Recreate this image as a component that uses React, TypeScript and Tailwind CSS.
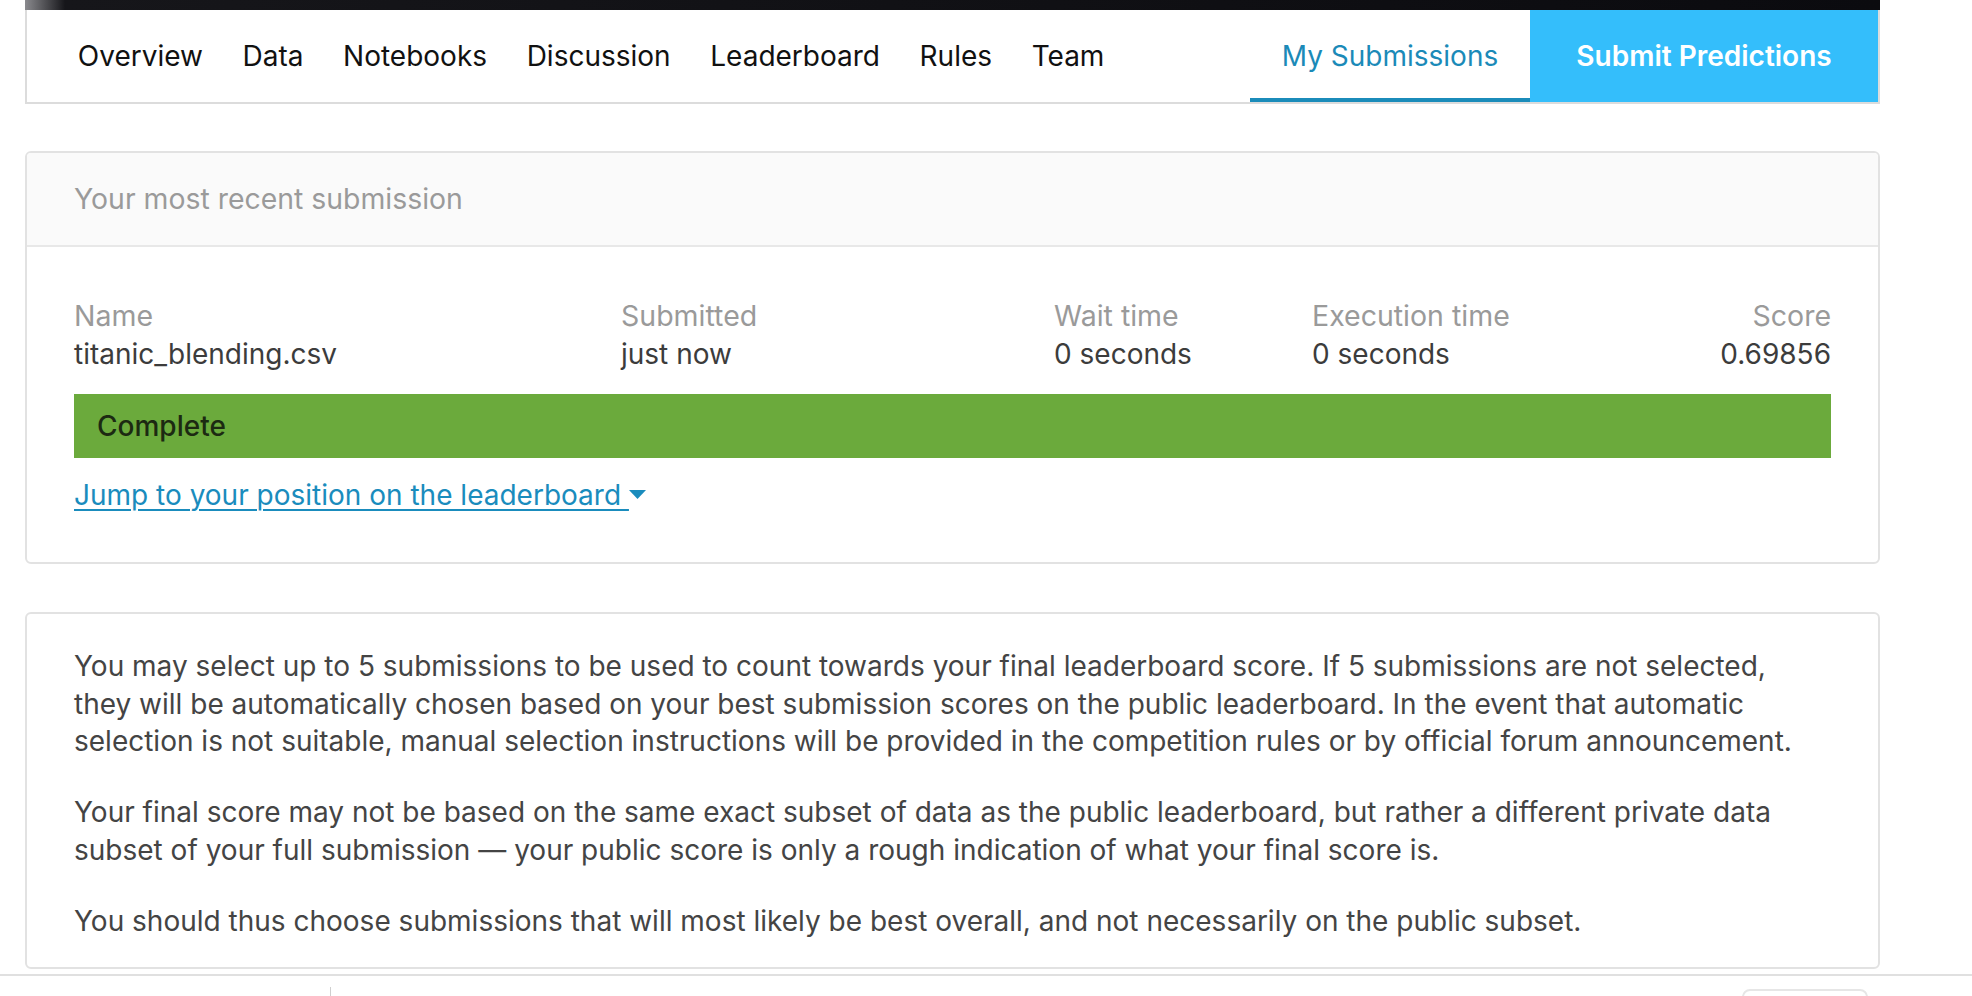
import * as React from 'react';

const TABS = ['Overview', 'Data', 'Notebooks', 'Discussion', 'Leaderboard', 'Rules', 'Team'];

const PARAGRAPHS = [
  'You may select up to 5 submissions to be used to count towards your final leaderboard score. If 5 submissions are not selected, they will be automatically chosen based on your best submission scores on the public leaderboard. In the event that automatic selection is not suitable, manual selection instructions will be provided in the competition rules or by official forum announcement.',
  'Your final score may not be based on the same exact subset of data as the public leaderboard, but rather a different private data subset of your full submission — your public score is only a rough indication of what your final score is.',
  'You should thus choose submissions that will most likely be best overall, and not necessarily on the public subset.',
];

function CompetitionNav() {
  return (
    <div>
      <div className="h-[10px] bg-[linear-gradient(90deg,#8a8a8e_0px,#16161a_40px,#0b0b0f_100%)]" />
      <div className="flex h-[94px] items-stretch border-x-2 border-b-2 border-[#dcdcdc] bg-white pl-[31px]">
        {TABS.map((tab) => (
          <div key={tab} className="flex items-center px-[19.8px] text-[28px] text-[#111]">
            {tab}
          </div>
        ))}
        <div className="flex-1" />
        <div className="flex w-[280px] items-center justify-center border-b-4 border-[#1b8cba] pt-[4px] text-[28px] text-[#1b8ab8]">
          My Submissions
        </div>
        <div className="flex w-[348px] items-center justify-center bg-[#34befb] text-[28px] font-semibold text-white">
          Submit Predictions
        </div>
      </div>
    </div>
  );
}

function RecentSubmission() {
  return (
    <div className="mt-[47px] overflow-hidden rounded-[6px] border-2 border-[#e2e2e2]">
      <div className="flex h-[94px] items-center border-b-2 border-[#e8e8e8] bg-[#fafafa] px-[47px] text-[28.4px] text-[#9a9a9a]">
        Your most recent submission
      </div>
      <div className="px-[47px] pb-[47px] pt-[49px]">
        <div className="grid grid-cols-[547px_433px_258px_1fr_auto] leading-[39px]">
          <div className="text-[28.5px] text-[#9a9a9a]">Name</div>
          <div className="text-[28.5px] text-[#9a9a9a]">Submitted</div>
          <div className="text-[28.5px] text-[#9a9a9a]">Wait time</div>
          <div className="text-[28.5px] text-[#9a9a9a]">Execution time</div>
          <div className="text-right text-[28.5px] text-[#9a9a9a]">Score</div>
          <div className="text-[28px] text-[#3c3c3c]">titanic_blending.csv</div>
          <div className="text-[28px] text-[#3c3c3c]">just now</div>
          <div className="text-[28px] text-[#3c3c3c]">0 seconds</div>
          <div className="text-[28px] text-[#3c3c3c]">0 seconds</div>
          <div className="text-right text-[28px] text-[#3c3c3c]">0.69856</div>
        </div>
        <div className="mt-[20px] flex h-[64px] items-center bg-[#6baa3c] px-[23px] text-[28px] font-medium text-[#1c2a12]">
          Complete
        </div>
        <a
          href="#leaderboard"
          className="mt-[17px] inline-flex items-center text-[28px] leading-[40px] text-[#1a8cbd] underline decoration-[1.5px] underline-offset-[4px]"
        >
          Jump to your position on the leaderboard&nbsp;
          <svg width="17" height="10" viewBox="0 0 17 10">
            <path d="M0 0 H17 L8.5 9 Z" fill="#1a8cbd" />
          </svg>
        </a>
      </div>
    </div>
  );
}

function SelectionNote() {
  return (
    <div className="mt-[48px] rounded-[6px] border-2 border-[#e2e2e2] pb-[27px] pl-[47px] pr-[54px] pt-[34px]">
      {PARAGRAPHS.map((p, i) => (
        <p
          key={i}
          className={`text-[28px] leading-[37.7px] text-[#444] ${i < PARAGRAPHS.length - 1 ? 'mb-[33px]' : ''}`}
        >
          {p}
        </p>
      ))}
    </div>
  );
}

export default function App() {
  return (
    <div className="h-[996px] w-[1972px] overflow-hidden bg-white font-['Inter',sans-serif]">
      <div className="ml-[25px] w-[1855px]">
        <CompetitionNav />
        <RecentSubmission />
        <SelectionNote />
      </div>
      <div className="mt-[5px] flex h-[30px] border-t-2 border-[#e0e0e0]">
        <div className="ml-[330px] mt-[11px] h-[20px] w-px bg-[#cfcfcf]" />
        <div className="ml-[1411px] mt-[13px] h-[40px] w-[126px] rounded-[8px] border-2 border-[#e6e6e6]" />
      </div>
    </div>
  );
}
